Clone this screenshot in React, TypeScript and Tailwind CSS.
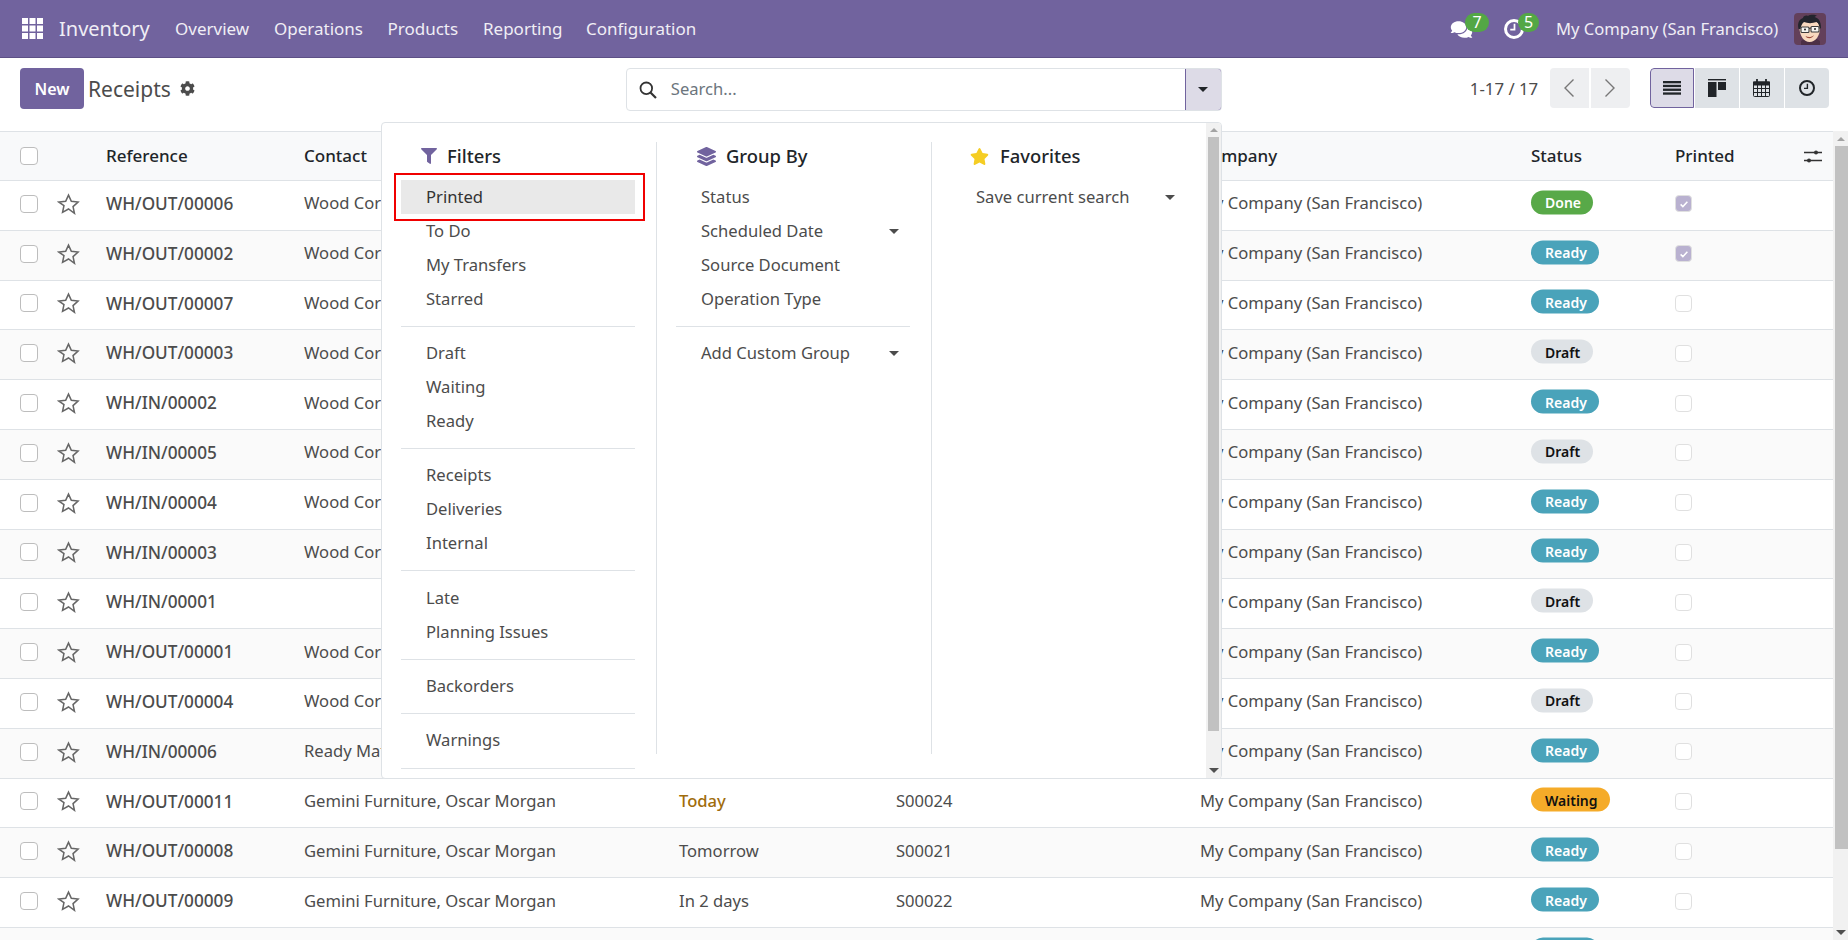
import React from "react";
import { FaCog, FaComments, FaFilter, FaLayerGroup, FaStar } from "react-icons/fa";

const FONT = "[font-family:'Noto_Sans','Open_Sans',sans-serif]";
const COLS = "grid grid-cols-[57px_49px_198px_375px_217px_304px_331px_144px_1fr] items-center";

type Row = { ref: string; contact: string; date?: string; dateCls?: string; src?: string; status: string; printed?: boolean };
const W = "Wood Corner";
const G = "Gemini Furniture, Oscar Morgan";
const rows: Row[] = [
  { ref: "WH/OUT/00006", contact: W, status: "Done", printed: true },
  { ref: "WH/OUT/00002", contact: W, status: "Ready", printed: true },
  { ref: "WH/OUT/00007", contact: W, status: "Ready" },
  { ref: "WH/OUT/00003", contact: W, status: "Draft" },
  { ref: "WH/IN/00002", contact: W, status: "Ready" },
  { ref: "WH/IN/00005", contact: W, status: "Draft" },
  { ref: "WH/IN/00004", contact: W, status: "Ready" },
  { ref: "WH/IN/00003", contact: W, status: "Ready" },
  { ref: "WH/IN/00001", contact: "", status: "Draft" },
  { ref: "WH/OUT/00001", contact: W, status: "Ready" },
  { ref: "WH/OUT/00004", contact: W, status: "Draft" },
  { ref: "WH/IN/00006", contact: "Ready Mat", status: "Ready" },
  { ref: "WH/OUT/00011", contact: G, date: "Today", dateCls: "text-[#a06c0c] font-medium", src: "S00024", status: "Waiting" },
  { ref: "WH/OUT/00008", contact: G, date: "Tomorrow", src: "S00021", status: "Ready" },
  { ref: "WH/OUT/00009", contact: G, date: "In 2 days", src: "S00022", status: "Ready" },
];

function Badge({ status, hideText }: { status: string; hideText?: boolean }) {
  const cls =
    status === "Done"
      ? "bg-[#58a948] text-white w-[62px]"
      : status === "Ready"
      ? "bg-[#4aa3ba] text-white w-[68px]"
      : status === "Draft"
      ? "bg-[#dee2e6] text-[#111] w-[62px]"
      : "bg-[#f5ab29] text-[#111] w-[79px]";
  return (
    <span className={`flex h-[24px] items-center rounded-full pl-[14px] text-[14px] font-semibold -translate-y-[1.5px] ${cls}`}>
      {hideText ? "" : status}
    </span>
  );
}

function Caret({ cls = "border-t-[#4c4c4c]" }: { cls?: string }) {
  return <span className={`inline-block h-0 w-0 border-x-[5px] border-t-[5px] border-x-transparent ${cls}`} />;
}

function CaretUp() {
  return <span className="inline-block h-0 w-0 border-x-[4px] border-b-[4px] border-x-transparent border-b-[#a3a3a3]" />;
}

function StarO() {
  return (
    <svg viewBox="0 0 24 23" className="h-[22px] w-[23px]" fill="none" stroke="#666" strokeWidth="1.6" strokeLinejoin="miter">
      <path d="M12 2.2l2.95 6.5 7.05.8-5.25 4.75 1.45 6.95L12 16.7l-6.2 3.5 1.45-6.95L2 9.5l7.05-.8z" />
    </svg>
  );
}

function Clock({ cls, stroke, sw }: { cls: string; stroke: string; sw: number }) {
  return (
    <svg viewBox="0 0 16 16" className={cls} fill="none" stroke={stroke} strokeWidth={sw}>
      <circle cx="8" cy="8" r={8 - sw / 2} />
      <path d="M8.4 3.8v4.6H5" strokeWidth="1.4" />
    </svg>
  );
}

function Avatar() {
  return (
    <svg viewBox="0 0 32 32" className="h-[32px] w-[32px] rounded-[4px]">
      <rect width="32" height="32" fill="#63405a" />
      <path d="M7 28c2-2 5-3 9-3s8 1 10 3v4H7z" fill="#4c2f45" />
      <path d="M5.5 15c0-5 4-8 10-8s10.500 3 10.500 8c0 7-4 14-10.500 14C9.500 29 5.500 22 5.500 15z" fill="#f8d9bf" />
      <path d="M4.500 16C3 9 6 6 9 5c0-2 3-3 5-2 3-2 8-1 9 0-1 0-2 .5-2.500 1 4 1 6.500 4 6.500 11l-1.500 1c0-3-1-6-3-7-4 1.500-9 1.500-12.500 0C8 10.500 7 13 6.500 16z" fill="#23252d" />
      <rect x="7" y="14" width="8" height="5.500" rx="1" fill="#f5f5f0" stroke="#3a3a3a" strokeWidth="1.100" />
      <rect x="17" y="13.500" width="8" height="5.500" rx="1" fill="#f5f5f0" stroke="#3a3a3a" strokeWidth="1.100" />
      <path d="M15 15.500l2-.5" stroke="#3a3a3a" strokeWidth="1.100" />
      <circle cx="11" cy="16.500" r="1" fill="#222" />
      <circle cx="21" cy="16" r="1" fill="#222" />
      <path d="M11.500 23c3 1.800 6 1.300 8.500-1-1 3.500-7 4.500-8.500 1z" fill="#9a4a3a" />
    </svg>
  );
}

function Check({ checked, cls }: { checked?: boolean; cls: string }) {
  return (
    <span className={`flex items-center justify-center rounded-[4px] border ${checked ? "border-[#b9b1d0] bg-[#b9b1d0]" : "bg-white"} ${cls}`}>
      {checked && (
        <svg viewBox="0 0 16 16" className="h-[12px] w-[12px]">
          <path d="M3.5 8.5l3 3 6-6.5" stroke="#fff" strokeWidth="2" fill="none" />
        </svg>
      )}
    </span>
  );
}

function Item({ label, caret, active }: { label: string; caret?: boolean; active?: boolean }) {
  return (
    <div className={`flex h-[34px] items-center justify-between pl-[25px] pr-[11px] ${active ? "bg-[#e9e9e9] text-[#333]" : "text-[#4c4c4c]"}`}>
      <span>{label}</span>
      {caret && <Caret />}
    </div>
  );
}

function Divider() {
  return <div className="my-[9.7px] h-px bg-[#dee2e6]" />;
}

function Heading({ pl, icon, label }: { pl: string; icon: React.ReactNode; label: string }) {
  return (
    <div className={`mb-[10px] flex h-[28px] items-center text-[18.4px] font-medium text-[#212529] ${pl}`}>
      {icon}
      <span>{label}</span>
    </div>
  );
}

function ViewBtn({ active, children }: { active?: boolean; children: React.ReactNode }) {
  return (
    <div className={`flex h-full w-[44px] items-center justify-center ${active ? "rounded-l-[4px] border border-[#71639e] bg-[#dddbe7]" : "bg-[#dee2e6]"}`}>
      {children}
    </div>
  );
}

export default function App() {
  return (
    <div className={`relative flex h-screen w-full flex-col overflow-hidden bg-white text-[16.6px] text-[#4c4c4c] ${FONT}`}>
      {/* Navbar */}
      <header className="flex h-[58px] shrink-0 items-center border-b border-[#5d5086] bg-[#71639e] text-[17px] text-[#f0eef5]">
        <svg viewBox="0 0 21 21" className="ml-[22px] h-[21px] w-[21px]" fill="#fff">
          <rect x="0" y="0" width="6" height="6" />
          <rect x="7.5" y="0" width="6" height="6" />
          <rect x="15" y="0" width="6" height="6" />
          <rect x="0" y="7.5" width="6" height="6" />
          <rect x="7.5" y="7.5" width="6" height="6" />
          <rect x="15" y="7.5" width="6" height="6" />
          <rect x="0" y="15" width="6" height="6" />
          <rect x="7.5" y="15" width="6" height="6" />
          <rect x="15" y="15" width="6" height="6" />
        </svg>
        <span className="ml-[16px] w-[116px] text-[20px]">Inventory</span>
        <span className="w-[99px]">Overview</span>
        <span className="w-[113.5px]">Operations</span>
        <span className="w-[95.5px]">Products</span>
        <span className="w-[103px]">Reporting</span>
        <span>Configuration</span>
        <div className="ml-auto flex items-center">
          <div className="relative h-[24px] w-[54px] text-white">
            <FaComments className="absolute left-0 top-[3px] h-[19px] w-[23px]" />
            <span className="absolute left-[15px] -top-[4px] flex h-[19px] w-[24px] items-center justify-center rounded-full bg-[#53a745] text-[16px]">7</span>
          </div>
          <div className="relative h-[24px] w-[52px] text-white">
            <div className="absolute left-0 top-[2px]">
              <Clock cls="h-[20px] w-[20px]" stroke="#fff" sw={2.4} />
            </div>
            <span className="absolute left-[14px] -top-[4px] flex h-[19px] w-[21px] items-center justify-center rounded-full bg-[#53a745] text-[16px]">5</span>
          </div>
          <span className="w-[238px] translate-y-px text-[16.6px]">My Company (San Francisco)</span>
          <div className="mr-[22px]">
            <Avatar />
          </div>
        </div>
      </header>

      {/* Toolbar */}
      <div className="flex h-[73px] shrink-0 items-start pt-[10px]">
        <button className="ml-[20px] h-[41px] w-[64px] rounded-[4px] bg-[#71639e] text-[16px] font-semibold text-white">New</button>
        <span className="ml-[4px] mt-[6px] text-[21px] text-[#4c4c4c]">Receipts</span>
        <FaCog className="ml-[9px] mt-[13px] h-[15px] w-[15px] text-[#4c4c4c]" />
        <div className="ml-[431px] flex h-[43px] w-[596px] overflow-hidden rounded-[4px] border border-[#dee2e6]">
          <div className="flex flex-1 items-center">
            <svg viewBox="0 0 18 18" className="ml-[12px] h-[18px] w-[18px]" fill="none" stroke="#333" strokeWidth="1.8">
              <circle cx="7.3" cy="7.3" r="5.8" />
              <path d="M11.5 11.5l5.5 5.5" strokeWidth="2.2" />
            </svg>
            <span className="ml-[14px] text-[#6c757d]">Search...</span>
          </div>
          <div className="-my-px -mr-px flex w-[37px] items-center justify-center rounded-r-[4px] border border-[#71639e] bg-[#dddbe7]">
            <Caret cls="border-t-[#212529]" />
          </div>
        </div>
        <span className="ml-[248px] mt-[8px] w-[80px] text-[16.8px]">1-17 / 17</span>
        <div className="flex h-[40px] gap-[2px]">
          <div className="flex w-[39px] items-center justify-center rounded-l-[4px] bg-[#eeeff1]">
            <svg viewBox="0 0 10 18" className="h-[18px] w-[10px]"><path d="M9.5.5L1 9l8.5 8.5" stroke="#777" strokeWidth="1.4" fill="none" /></svg>
          </div>
          <div className="flex w-[39px] items-center justify-center rounded-r-[4px] bg-[#eeeff1]">
            <svg viewBox="0 0 10 18" className="h-[18px] w-[10px]"><path d="M.5.5L9 9 .5 17.5" stroke="#777" strokeWidth="1.4" fill="none" /></svg>
          </div>
        </div>
        <div className="ml-[20px] flex h-[40px] gap-[1px] overflow-hidden rounded-[4px]">
          <ViewBtn active>
            <svg viewBox="0 0 18 14" className="h-[14px] w-[18px]" fill="#212529">
              <rect y="0" width="18" height="2.3" /><rect y="3.8" width="18" height="2.3" /><rect y="7.6" width="18" height="2.3" /><rect y="11.4" width="18" height="2.3" />
            </svg>
          </ViewBtn>
          <ViewBtn>
            <svg viewBox="0 0 18 18" className="h-[18px] w-[18px]" fill="#212529">
              <rect x="0" y="0" width="18" height="1.4" /><rect x="0" y="3" width="8.5" height="15" /><rect x="10" y="3" width="8" height="8" />
            </svg>
          </ViewBtn>
          <ViewBtn>
            <svg viewBox="0 0 17 18" className="h-[18px] w-[17px]" fill="none" stroke="#212529" strokeWidth="1">
              <rect x="0.5" y="3" width="16" height="14.5" rx="1" />
              <rect x="0.5" y="3" width="16" height="3" fill="#212529" />
              <path d="M4 0v4M13 0v4" strokeWidth="1.8" />
              <path d="M0.5 9.5h16M0.5 13.5h16M4.5 6v11.5M8.5 6v11.5M12.5 6v11.5" />
            </svg>
          </ViewBtn>
          <ViewBtn>
            <Clock cls="h-[16px] w-[16px]" stroke="#212529" sw={2} />
          </ViewBtn>
        </div>
      </div>

      {/* List */}
      <div className="flex min-h-0 flex-1">
        <div className="min-w-0 flex-1">
          <div className={`${COLS} h-[50px] border-y border-[#dee2e6] bg-[#f8f9fa] text-[17px] font-medium text-[#212529]`}>
            <div className="pl-[20px]"><Check cls="h-[18px] w-[18px] border-[#bdbdbd]" /></div>
            <div />
            <div>Reference</div>
            <div>Contact</div>
            <div />
            <div />
            <div>Company</div>
            <div>Status</div>
            <div className="flex items-center justify-between pr-[11px]">
              <span>Printed</span>
              <svg viewBox="0 0 18 15" className="h-[15px] w-[18px]" fill="#333" stroke="#333" strokeWidth="1.4">
                <path d="M0 3.5h18M0 11.5h18" fill="none" />
                <circle cx="12" cy="3.5" r="2" strokeWidth="0" />
                <circle cx="5" cy="11.5" r="2" strokeWidth="0" />
              </svg>
            </div>
          </div>
          {rows.map((r, i) => (
            <div key={r.ref} className={`${COLS} h-[49.8px] border-b border-[#dee2e6] pb-[3px] ${i % 2 ? "bg-[#fafafa]" : "bg-white"}`}>
              <div className="pl-[20px]"><Check cls="h-[18px] w-[18px] border-[#bdbdbd]" /></div>
              <div><StarO /></div>
              <div className="text-[17.2px] font-medium">{r.ref}</div>
              <div>{r.contact}</div>
              <div className={r.dateCls}>{r.date}</div>
              <div>{r.src}</div>
              <div>My Company (San Francisco)</div>
              <div><Badge status={r.status} /></div>
              <div><Check checked={r.printed} cls="h-[17px] w-[17px] border-[#e0e0e0]" /></div>
            </div>
          ))}
          <div className={`${COLS} h-[49.8px] bg-[#fafafa] pb-[3px]`}>
            <div className="pl-[20px]"><Check cls="h-[18px] w-[18px] border-[#bdbdbd]" /></div>
            <div><StarO /></div>
            <div />
            <div />
            <div />
            <div />
            <div />
            <div><Badge status="Ready" hideText /></div>
            <div><Check cls="h-[17px] w-[17px] border-[#e0e0e0]" /></div>
          </div>
        </div>
        {/* page scrollbar */}
        <div className="flex w-[15px] shrink-0 flex-col bg-[#f1f1f1]">
          <div className="flex h-[15px] items-center justify-center"><CaretUp /></div>
          <div className="ml-[2px] h-[703px] bg-[#c1c1c1]" />
          <div className="mt-auto flex h-[15px] items-center justify-center"><Caret cls="border-t-[#505050]" /></div>
        </div>
      </div>

      {/* Search dropdown */}
      <div className="absolute left-[381px] top-[122px] flex h-[657px] w-[841px] overflow-hidden rounded-[4px] border border-[#dee2e6] bg-white">
        <div className="flex flex-1 pt-[19px]">
          <div className="h-[612px] w-[275px] border-r border-[#dee2e6] pl-[19px] pr-[21px]">
            <Heading pl="pl-[20px]" label="Filters" icon={<FaFilter className="mr-[10px] h-[16px] w-[16px] text-[#71639e]" />} />
            <div className="relative">
              <div className="pointer-events-none absolute -left-[7px] -top-[7px] h-[48px] w-[251px] border-2 border-[#f00000]" />
              <Item label="Printed" active />
            </div>
            <Item label="To Do" />
            <Item label="My Transfers" />
            <Item label="Starred" />
            <Divider />
            <Item label="Draft" />
            <Item label="Waiting" />
            <Item label="Ready" />
            <Divider />
            <Item label="Receipts" />
            <Item label="Deliveries" />
            <Item label="Internal" />
            <Divider />
            <Item label="Late" />
            <Item label="Planning Issues" />
            <Divider />
            <Item label="Backorders" />
            <Divider />
            <Item label="Warnings" />
            <Divider />
          </div>
          <div className="h-[612px] w-[275px] border-r border-[#dee2e6] pl-[19px] pr-[21px]">
            <Heading pl="pl-[21px]" label="Group By" icon={<FaLayerGroup className="mr-[10px] h-[19px] w-[19px] text-[#71639e]" />} />
            <Item label="Status" />
            <Item label="Scheduled Date" caret />
            <Item label="Source Document" />
            <Item label="Operation Type" />
            <Divider />
            <Item label="Add Custom Group" caret />
          </div>
          <div className="flex-1 pl-[19px] pr-[20px]">
            <Heading pl="pl-[19px]" label="Favorites" icon={<FaStar className="mr-[11px] h-[19px] w-[19px] text-[#f5cd23]" />} />
            <Item label="Save current search" caret />
          </div>
        </div>
        <div className="flex w-[15px] shrink-0 flex-col bg-[#f1f1f1]">
          <div className="flex h-[14px] items-center justify-center"><CaretUp /></div>
          <div className="mx-[2px] h-[594px] bg-[#c1c1c1]" />
          <div className="mt-auto flex h-[15px] items-center justify-center"><Caret cls="border-t-[#505050]" /></div>
        </div>
      </div>
    </div>
  );
}
